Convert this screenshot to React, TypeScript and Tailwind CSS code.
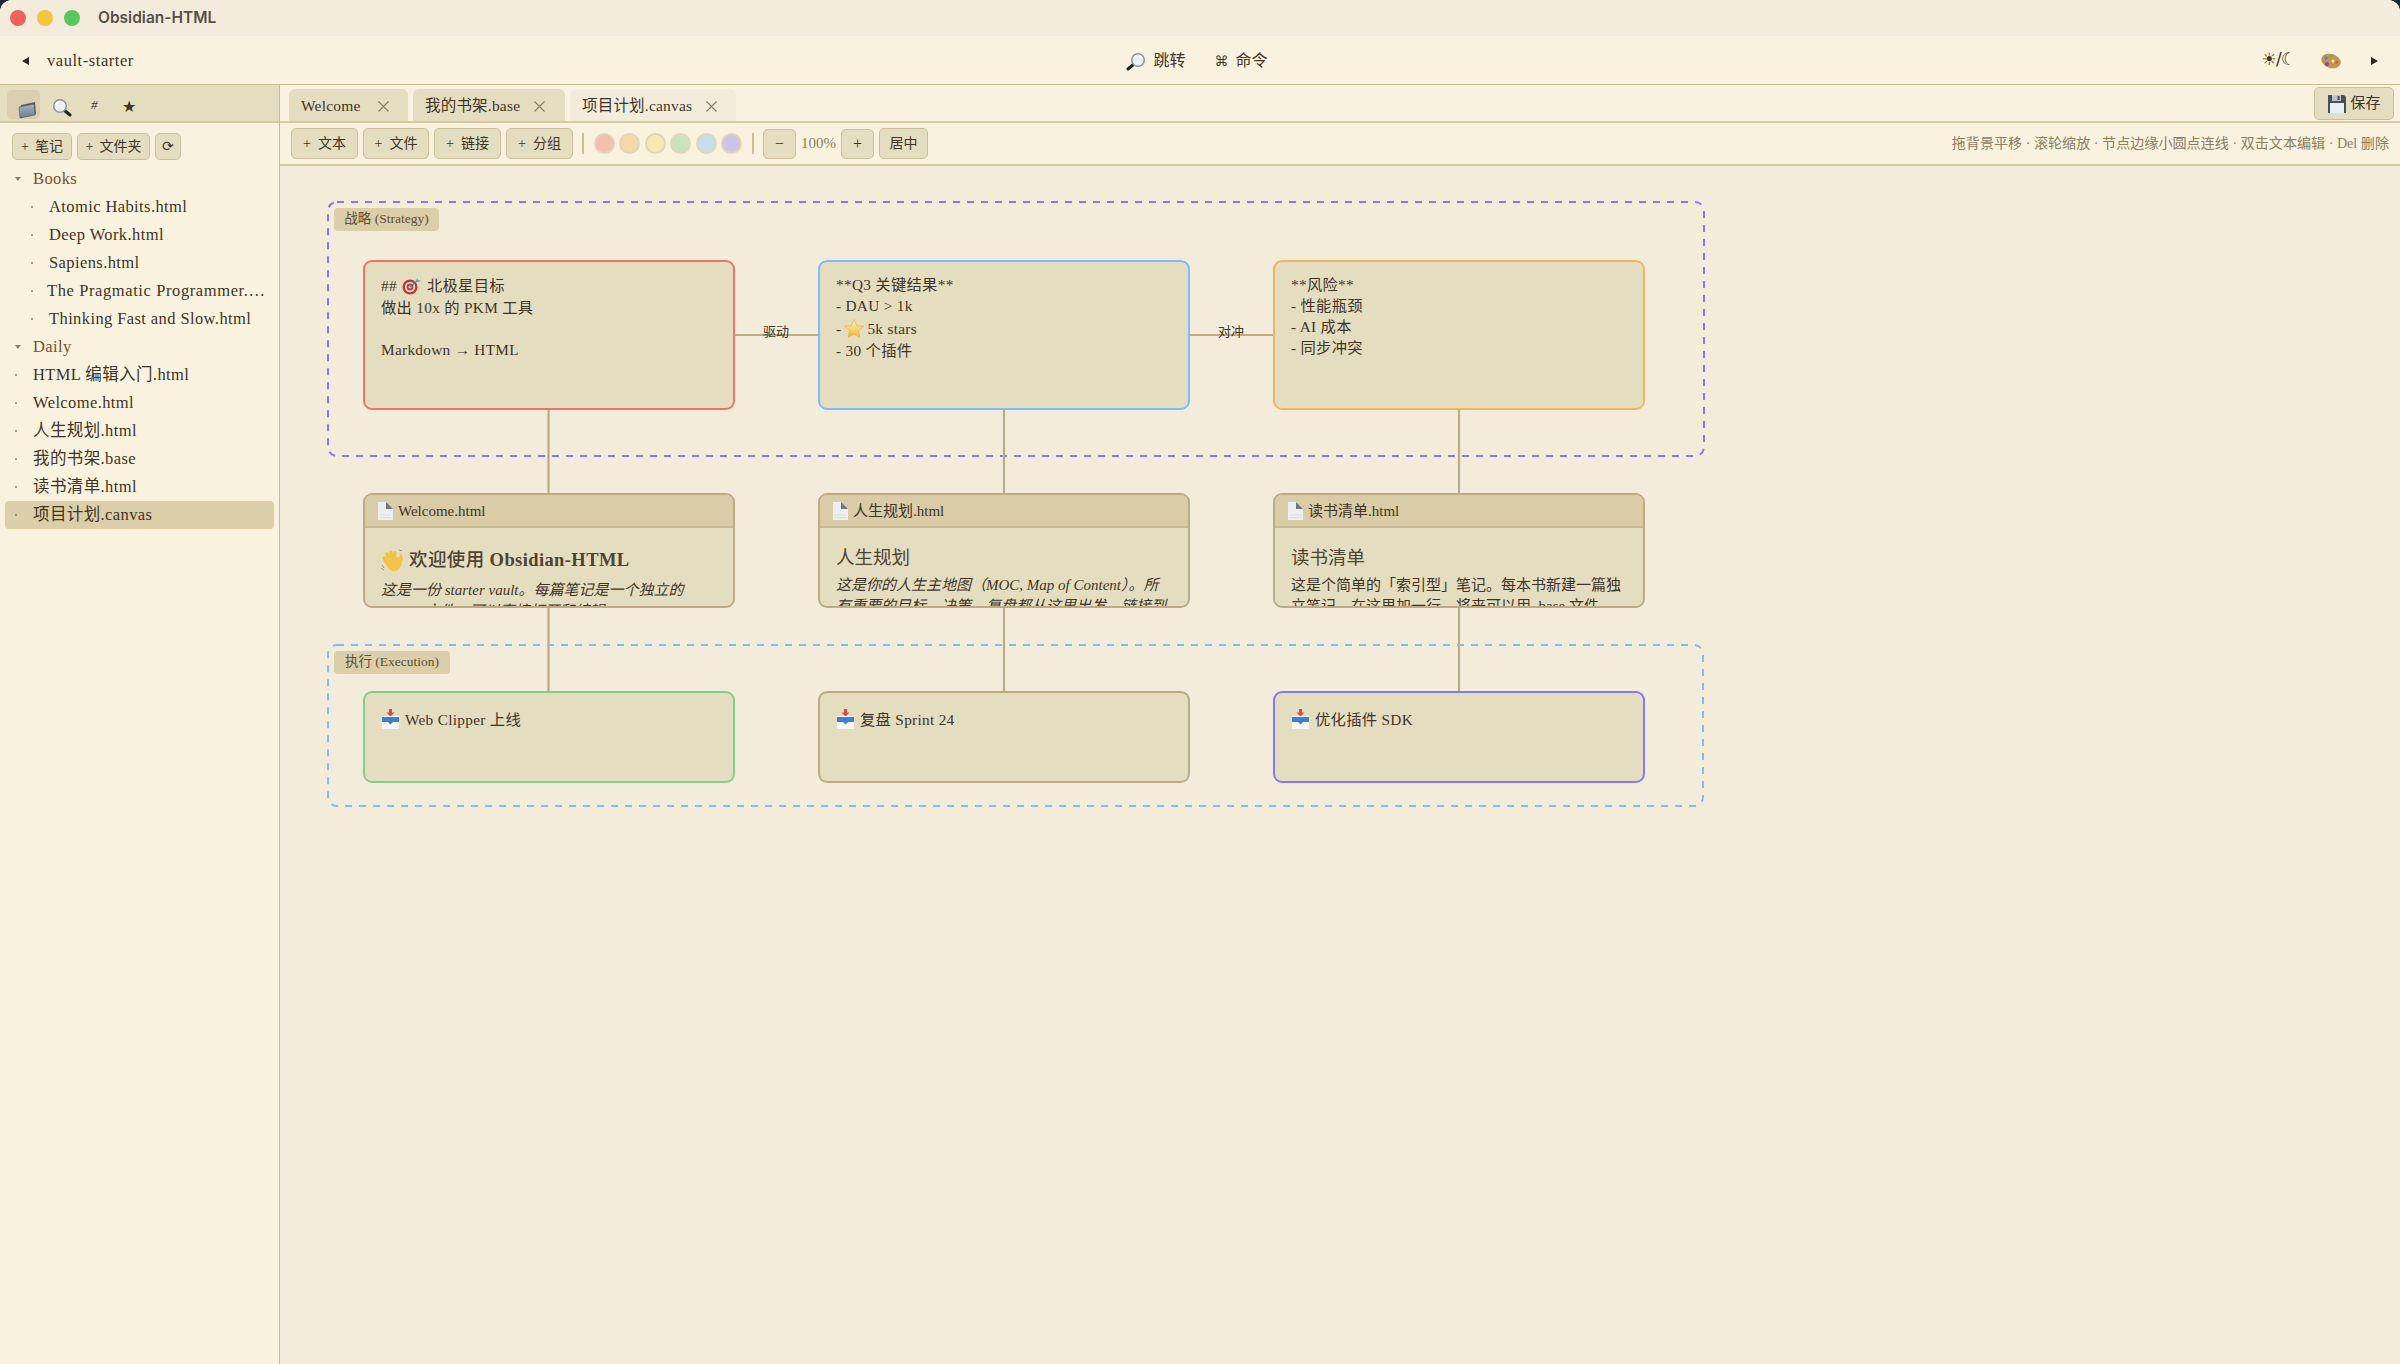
import type { ReactNode } from "react";

const serif = "font-['Liberation_Serif','Noto_Sans_CJK_SC',serif]";

function FolderIcon() {
  return (
    <svg width="19" height="18" viewBox="0 0 19 18">
      <defs>
        <linearGradient id="fold" x1="0" y1="0" x2="0" y2="1">
          <stop offset="0" stopColor="#a9b4c2" />
          <stop offset="1" stopColor="#6b7c91" />
        </linearGradient>
      </defs>
      <path d="M3 4 L17 1 L18 13 L2 17 Z" fill="#59616d" />
      <path d="M1 6 L16 3 L17 14 L2 17 Z" fill="url(#fold)" stroke="#4d5661" strokeWidth="0.6" />
    </svg>
  );
}

function GlassIcon({ flip }: { flip?: boolean }) {
  return (
    <svg width="20" height="19" viewBox="0 0 20 19" className={flip ? "-scale-x-100" : ""}>
      <path d="M12 12 L18 17" stroke="#222" strokeWidth="3" strokeLinecap="round" />
      <circle cx="8" cy="8" r="6.3" fill="#eef1f4" stroke="#8f949a" strokeWidth="1.5" />
      <path d="M4 7 A4.5 4.5 0 0 1 8 3.5" stroke="#fff" strokeWidth="1.5" fill="none" />
    </svg>
  );
}

function PaletteIcon() {
  return (
    <svg width="22" height="18" viewBox="0 0 22 18">
      <ellipse cx="11" cy="9" rx="10" ry="7" fill="#c9944a" transform="rotate(18 11 9)" />
      <circle cx="6" cy="6" r="1.8" fill="#3f8fe0" />
      <circle cx="11" cy="4" r="1.5" fill="#58b956" />
      <circle cx="7" cy="12" r="2" fill="#7d42c7" />
      <circle cx="17" cy="10" r="1.6" fill="#e2574c" />
      <circle cx="13" cy="9" r="1.5" fill="#f3ead6" />
    </svg>
  );
}

function FloppyIcon() {
  return (
    <svg width="20" height="20" viewBox="0 0 20 20">
      <path d="M1 1 H17 L19 3 V19 H1 Z" fill="#4a4d55" />
      <rect x="5" y="1" width="9" height="6" fill="#bcc3cc" />
      <rect x="10.5" y="2" width="2" height="4" fill="#4a4d55" />
      <rect x="3" y="9" width="14" height="10" fill="#e6eef8" />
    </svg>
  );
}

function FileIcon() {
  return (
    <svg width="15" height="18" viewBox="0 0 15 18" className="shrink-0">
      <path d="M0 0 H8 L15 7 V18 H0 Z" fill="#eceef0" />
      <path d="M8 0 L15 7 H8 Z" fill="#6f7781" />
      <path d="M2 13 H13 M2 15.5 H13" stroke="#d8dbde" strokeWidth="0.8" />
    </svg>
  );
}

function TargetIcon() {
  return (
    <svg width="20" height="18" viewBox="0 0 20 18" className="shrink-0">
      <circle cx="8" cy="10" r="7.5" fill="#c6322c" />
      <circle cx="8" cy="10" r="5.2" fill="#f3e4dc" />
      <circle cx="8" cy="10" r="3.4" fill="#c6322c" />
      <circle cx="8" cy="10" r="1.5" fill="#f3e4dc" />
      <path d="M8 10 L16 3" stroke="#3e8f9e" strokeWidth="1.5" />
      <path d="M15 1 L16 3 L19 3.5 L17 5 L14 4 Z" fill="#4fb5c4" />
    </svg>
  );
}

function StarIcon() {
  return (
    <svg width="20" height="19" viewBox="0 0 20 19" className="shrink-0 mx-[3px] inline-block">
      <defs>
        <linearGradient id="star" x1="0" y1="0" x2="0" y2="1">
          <stop offset="0" stopColor="#fff4b8" />
          <stop offset="1" stopColor="#f2b632" />
        </linearGradient>
      </defs>
      <path d="M10 0.5 L12.8 6.6 L19.5 7.3 L14.5 11.8 L15.9 18.5 L10 15.1 L4.1 18.5 L5.5 11.8 L0.5 7.3 L7.2 6.6 Z" fill="url(#star)" stroke="#e5a92c" strokeWidth="0.6" />
    </svg>
  );
}

function HandIcon() {
  return (
    <svg width="23" height="24" viewBox="0 0 23 24" className="shrink-0">
      <path d="M5 13 L3 9 M7 9 L6 5 M10 8 L10 3 M13 8 L14 4" stroke="#f0c045" strokeWidth="3.4" strokeLinecap="round" />
      <path d="M4 12 L14 7 L18 9 L20 4 L22 9 L20 17 Q17 23 11 22 Q6 20 4 12 Z" fill="#f3c348" />
      <path d="M1 16 L3 19 M0 19 L3 21 M18 1 L21 2" stroke="#8b8b86" strokeWidth="0.9" />
    </svg>
  );
}

function InboxIcon() {
  return (
    <svg width="19" height="20" viewBox="0 0 19 20" className="shrink-0">
      <path d="M9.5 0 V4" stroke="#e0483e" strokeWidth="3" />
      <path d="M5.5 3.5 H13.5 L9.5 7.5 Z" fill="#e0483e" />
      <path d="M1 7 H18 V20 H1 Z" fill="#f7f7f5" />
      <path d="M1 8 H18 V13 L12 13 L9.5 15.5 L7 13 L1 13 Z" fill="#3f7fcb" />
    </svg>
  );
}

function CloseIcon() {
  return (
    <svg width="11" height="11" viewBox="0 0 11 11" className="shrink-0">
      <path d="M0.5 0.5 L10.5 10.5 M10.5 0.5 L0.5 10.5" stroke="#8c7d62" strokeWidth="1.1" />
    </svg>
  );
}

function Btn({ children, className = "" }: { children: ReactNode; className?: string }) {
  return (
    <button className={`flex items-center justify-center rounded-[5px] border-[1.5px] border-[#cdbf9a] bg-[#e5ddc0] text-[14px] text-[#3f3426] ${className}`}>
      {children}
    </button>
  );
}

function FileRow({ name, nested, active, ellipsis }: { name: string; nested?: boolean; active?: boolean; ellipsis?: boolean }) {
  return (
    <div className={`mx-[5px] flex h-[28px] items-center rounded-[4px] text-[16.5px] tracking-[0.4px] text-[#3f3426] ${active ? "bg-[#dbcea8]" : ""} ${nested ? "pl-[26px]" : "pl-[10px]"}`}>
      <span className="h-[2px] w-[2px] shrink-0 rounded-full bg-[#8c7d62]" />
      <span className={`whitespace-nowrap ${ellipsis ? "ml-[14px] w-[219px] truncate tracking-[0.6px]" : "ml-[16px]"}`}>{name}</span>
    </div>
  );
}

function Folder({ name }: { name: string }) {
  return (
    <div className="flex h-[28px] items-center pl-[15px] text-[16.5px] tracking-[0.4px] text-[#7d4e24]">
      <span className="h-0 w-0 border-x-[3.5px] border-t-[4px] border-x-transparent border-t-[#8c7d62]" />
      <span className="ml-[12px]">{name}</span>
    </div>
  );
}

function TextNode({ pos, border, children }: { pos: string; border: string; children: ReactNode }) {
  return (
    <div className={`absolute rounded-[9px] border-[2.5px] bg-[#e5ddc0] px-[16px] pt-[12px] text-[15.3px] leading-[21px] tracking-[0.3px] text-[#3f3426] ${pos} ${border}`}>
      {children}
    </div>
  );
}

function FileNode({ pos, name, title, children }: { pos: string; name: string; title: ReactNode; children: ReactNode }) {
  return (
    <div className={`absolute flex h-[115px] w-[372px] flex-col overflow-hidden rounded-[9px] border-[2.5px] border-[#bcab84] bg-[#e5ddc0] text-[#3f3426] ${pos}`}>
      <div className="flex h-[33px] shrink-0 items-center gap-[5px] border-b-[2px] border-[#c7b890] bg-[#d9cca6] pl-[13px] pt-[1px] text-[15px]">
        <FileIcon />
        <span>{name}</span>
      </div>
      <div className="px-[16px] pt-[19px]">
        {title}
        {children}
      </div>
    </div>
  );
}

export default function App() {
  return (
    <div className={`h-screen w-full overflow-hidden bg-[#1c2a36] ${serif}`}>
      <div className="flex h-full flex-col overflow-hidden rounded-t-[12px] bg-[#f9f2df]">
        {/* Title bar */}
        <div className="flex h-[36px] shrink-0 items-center bg-[#f3ecdc] pl-[10px]">
          <span className="h-[16px] w-[16px] rounded-full bg-[#f0625f]" />
          <span className="ml-[11px] h-[16px] w-[16px] rounded-full bg-[#f6c33d]" />
          <span className="ml-[11px] h-[16px] w-[16px] rounded-full bg-[#5cc65f]" />
          <span className="ml-[18px] font-['Inter',sans-serif] text-[15.5px] font-semibold text-[#57504a]">Obsidian-HTML</span>
        </div>

        {/* Top toolbar */}
        <div className="grid h-[49px] shrink-0 grid-cols-[1fr_auto_1fr] items-center border-b-[1.5px] border-[#c9ba93] pt-[2px] text-[#3f3426]">
          <div className="flex items-center pl-[22px]">
            <span className="h-0 w-0 border-y-[4px] border-r-[7px] border-y-transparent border-r-[#2e2820]" />
            <span className="ml-[18px] text-[16.5px] tracking-[0.55px]">vault-starter</span>
          </div>
          <div className="mr-[6px] flex items-center text-[16px]">
            <GlassIcon flip />
            <span className="ml-[7px]">跳转</span>
            <span className="ml-[29px] font-['DejaVu_Sans',sans-serif] text-[14px]">⌘</span>
            <span className="ml-[7px]">命令</span>
          </div>
          <div className="flex items-center justify-end pr-[22px]">
            <span className="mb-[3px] font-['DejaVu_Sans',sans-serif] text-[17px] tracking-[-1px]">☀/☾</span>
            <span className="ml-[25px]"><PaletteIcon /></span>
            <span className="ml-[29px] h-0 w-0 border-y-[4px] border-l-[7px] border-y-transparent border-l-[#2e2820]" />
          </div>
        </div>

        <div className="flex min-h-0 flex-1">
          {/* Sidebar */}
          <aside className="w-[280px] shrink-0 border-r-[1.5px] border-[#c9ba93]">
            <div className="flex h-[38px] items-end border-b-[2px] border-[#d6c9a6] bg-[#e5ddc0] pb-[2px] pl-[7px] text-[#3f3426]">
              <div className="flex h-[29px] w-[33px] items-end justify-end rounded-[5px] bg-[#dccfb0] pr-[3px]"><FolderIcon /></div>
              <span className="mb-[2px] ml-[12px]"><GlassIcon /></span>
              <span className="mb-[5px] ml-[19px] w-[8px] text-[13px] italic">#</span>
              <span className="ml-[23px] font-['DejaVu_Sans',sans-serif] text-[16px]">★</span>
            </div>
            <div className="flex gap-[5px] pl-[12px] pt-[10px]">
              <Btn className="h-[27px] w-[60px]">+&nbsp;&thinsp;笔记</Btn>
              <Btn className="h-[27px] w-[73px]">+&nbsp;&thinsp;文件夹</Btn>
              <Btn className="h-[27px] w-[26px] text-[7px]">⟳</Btn>
            </div>
            <div className="pt-[5px]">
              <Folder name="Books" />
              <FileRow nested name="Atomic Habits.html" />
              <FileRow nested name="Deep Work.html" />
              <FileRow nested name="Sapiens.html" />
              <FileRow nested ellipsis name="The Pragmatic Programmer.html" />
              <FileRow nested name="Thinking Fast and Slow.html" />
              <Folder name="Daily" />
              <FileRow name="HTML 编辑入门.html" />
              <FileRow name="Welcome.html" />
              <FileRow name="人生规划.html" />
              <FileRow name="我的书架.base" />
              <FileRow name="读书清单.html" />
              <FileRow active name="项目计划.canvas" />
            </div>
          </aside>

          {/* Main */}
          <main className="flex min-w-0 flex-1 flex-col">
            <div className="flex h-[38px] shrink-0 items-end gap-[5px] border-b-[2px] border-[#d6c9a6] pl-[9px] pr-[6px] text-[15.5px] tracking-[0.2px] text-[#3f3426]">
              <div className="flex h-[32px] w-[119px] items-center justify-between rounded-t-[6px] bg-[#e5ddc0] pl-[12px] pr-[19px] pt-[2px]">Welcome <CloseIcon /></div>
              <div className="flex h-[32px] w-[152px] items-center justify-between rounded-t-[6px] bg-[#e5ddc0] pl-[12px] pr-[20px] pt-[2px]">我的书架.base <CloseIcon /></div>
              <div className="flex h-[32px] w-[166px] items-center justify-between rounded-t-[6px] bg-[#f3ecdb] pl-[12px] pr-[19px] pt-[2px]">项目计划.canvas <CloseIcon /></div>
              <Btn className="mb-[1px] ml-auto h-[33px] w-[80px] gap-[3px] text-[15px]"><FloppyIcon /> 保存</Btn>
            </div>

            <div className="flex h-[43px] shrink-0 items-center border-b-[2px] border-[#d6c9a6] pl-[11px] pr-[11px]">
              <div className="flex gap-[5px]">
                <Btn className="h-[31px] w-[67px]">+&nbsp; 文本</Btn>
                <Btn className="h-[31px] w-[66px]">+&nbsp; 文件</Btn>
                <Btn className="h-[31px] w-[67px]">+&nbsp; 链接</Btn>
                <Btn className="h-[31px] w-[67px]">+&nbsp; 分组</Btn>
              </div>
              <span className="ml-[9px] h-[21px] w-[1.5px] bg-[#cdbf9a]" />
              <div className="ml-[10px] flex gap-[4.6px]">
                <span className="h-[21px] w-[21px] rounded-full border-[2px] border-[#e0d6bb] bg-[#f5bcb0]" />
                <span className="h-[21px] w-[21px] rounded-full border-[2px] border-[#e0d6bb] bg-[#f5d7a8]" />
                <span className="h-[21px] w-[21px] rounded-full border-[2px] border-[#e0d6bb] bg-[#f7e8ae]" />
                <span className="h-[21px] w-[21px] rounded-full border-[2px] border-[#e0d6bb] bg-[#cbe2bd]" />
                <span className="h-[21px] w-[21px] rounded-full border-[2px] border-[#e0d6bb] bg-[#c6dcea]" />
                <span className="h-[21px] w-[21px] rounded-full border-[2px] border-[#e0d6bb] bg-[#cdc2e8]" />
              </div>
              <span className="ml-[10px] h-[21px] w-[1.5px] bg-[#cdbf9a]" />
              <Btn className="ml-[9px] h-[30px] w-[33px] text-[16px]">−</Btn>
              <span className="w-[45px] text-center text-[15px] text-[#8c7d62]">100%</span>
              <Btn className="h-[30px] w-[33px] text-[16px]">+</Btn>
              <Btn className="ml-[5px] h-[31px] w-[49px] text-[14px]">居中</Btn>
              <span className="ml-auto text-[14.1px] text-[#8c7d62]">拖背景平移 · 滚轮缩放 · 节点边缘小圆点连线 · 双击文本编辑 · Del 删除</span>
            </div>

            {/* Canvas */}
            <div className="relative min-h-0 flex-1 overflow-hidden bg-[#f3ecdb]">
              <svg className="absolute left-0 top-0" width="1500" height="700">
                <rect x="48" y="36" width="1376" height="254" rx="9" fill="none" stroke="#8678fb" strokeWidth="2" strokeDasharray="7 7" />
                <rect x="48" y="479" width="1375" height="161" rx="9" fill="none" stroke="#7fbcfb" strokeWidth="2" strokeDasharray="7 7" />
                <g stroke="#bcab84" strokeWidth="2.2">
                  <path d="M268.5 244 V327 M724 244 V327 M1179 244 V327" />
                  <path d="M268.5 442 V525 M724 442 V525 M1179 442 V525" />
                  <path d="M455 169 H538 M910 169 H993" />
                </g>
              </svg>

              <div className="absolute left-[54px] top-[42px] flex h-[23px] w-[105px] items-center justify-center rounded-[4px] bg-[#dbcea8] text-[13.5px] text-[#5c4f3a]">战略 (Strategy)</div>
              <div className="absolute left-[54px] top-[485px] flex h-[23px] w-[116px] items-center justify-center rounded-[4px] bg-[#dbcea8] text-[13.5px] text-[#5c4f3a]">执行 (Execution)</div>

              <span className="absolute left-[483px] top-[156px] text-[13px] text-[#3f3426]">驱动</span>
              <span className="absolute left-[938px] top-[156px] text-[13px] text-[#3f3426]">对冲</span>

              <TextNode pos="left-[83px] top-[94px] h-[150px] w-[372px]" border="border-[#f0736a]">
                <div className="flex h-[23px] items-center gap-[5px]">## <TargetIcon /> 北极星目标</div>
                <div>做出 10x 的 PKM 工具</div>
                <div>&nbsp;</div>
                <div>Markdown → HTML</div>
              </TextNode>
              <TextNode pos="left-[538px] top-[94px] h-[150px] w-[372px]" border="border-[#7fbcfb]">
                <div>**Q3 关键结果**</div>
                <div>- DAU &gt; 1k</div>
                <div className="flex h-[24px] items-center">- <StarIcon /> 5k stars</div>
                <div>- 30 个插件</div>
              </TextNode>
              <TextNode pos="left-[993px] top-[94px] h-[150px] w-[372px]" border="border-[#eeb65f]">
                <div>**风险**</div>
                <div>- 性能瓶颈</div>
                <div>- AI 成本</div>
                <div>- 同步冲突</div>
              </TextNode>

              <FileNode
                pos="left-[83px] top-[327px]"
                name="Welcome.html"
                title={<div className="flex h-[27px] items-center gap-[5px] text-[18.5px] font-bold tracking-[0.4px] text-[#4f4332]"><HandIcon /> <span className="font-medium">欢迎使用</span> Obsidian-HTML</div>}
              >
                <p className="mt-[6px] text-[15px] italic leading-[21px]">这是一份 starter vault。每篇笔记是一个独立的 HTML 文件，可以直接打开和编辑。</p>
              </FileNode>
              <FileNode
                pos="left-[538px] top-[327px]"
                name="人生规划.html"
                title={<div className="flex h-[24px] items-center text-[18.5px] text-[#4f4332]">人生规划</div>}
              >
                <p className="mt-[4px] text-[15px] italic leading-[21px]">这是你的人生主地图（MOC, Map of Content）。所有重要的目标、决策、复盘都从这里出发，链接到</p>
              </FileNode>
              <FileNode
                pos="left-[993px] top-[327px]"
                name="读书清单.html"
                title={<div className="flex h-[24px] items-center text-[18.5px] text-[#4f4332]">读书清单</div>}
              >
                <p className="mt-[4px] text-[15px] leading-[21px]">这是个简单的「索引型」笔记。每本书新建一篇独立笔记，在这里加一行。将来可以用 .base 文件</p>
              </FileNode>

              <TextNode pos="left-[83px] top-[525px] h-[92px] w-[372px]" border="border-[#82cf8a]">
                <div className="mt-[2px] flex h-[24px] items-center gap-[5px]"><InboxIcon /> Web Clipper 上线</div>
              </TextNode>
              <TextNode pos="left-[538px] top-[525px] h-[92px] w-[372px]" border="border-[#bcab84]">
                <div className="mt-[2px] flex h-[24px] items-center gap-[5px]"><InboxIcon /> 复盘 Sprint 24</div>
              </TextNode>
              <TextNode pos="left-[993px] top-[525px] h-[92px] w-[372px]" border="border-[#8678fb]">
                <div className="mt-[2px] flex h-[24px] items-center gap-[5px]"><InboxIcon /> 优化插件 SDK</div>
              </TextNode>
            </div>
          </main>
        </div>
      </div>
    </div>
  );
}
